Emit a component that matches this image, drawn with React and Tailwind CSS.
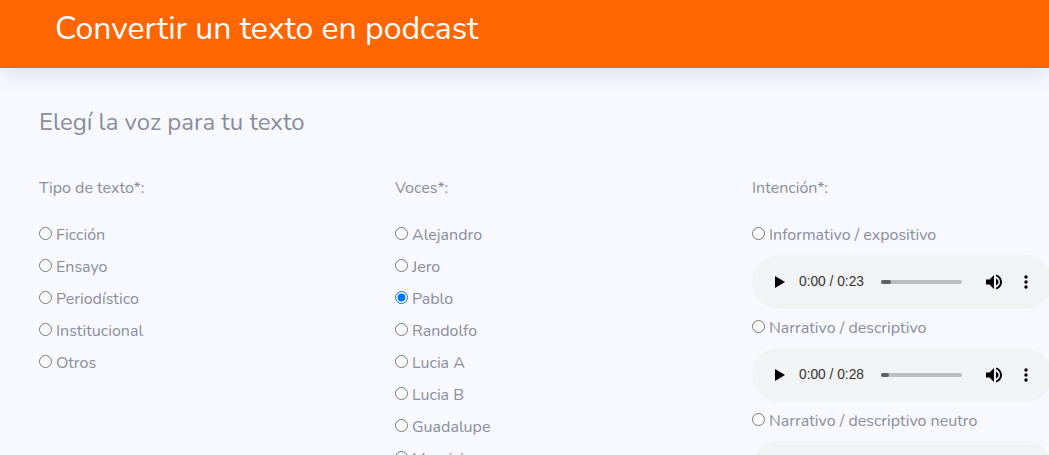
const tipos = ["Ficción", "Ensayo", "Periodístico", "Institucional", "Otros"];
const voces = ["Alejandro", "Jero", "Pablo", "Randolfo", "Lucia A", "Lucia B", "Guadalupe", "Mauricio"];
const intenciones = [
  { label: "Informativo / expositivo", time: "0:00 / 0:23", progress: 10 },
  { label: "Narrativo / descriptivo", time: "0:00 / 0:28", progress: 8 },
  { label: "Narrativo / descriptivo neutro", time: "0:00 / 0:31", progress: 8 },
];

function Radio({ label, name, checked }) {
  return (
    <label className="flex items-center h-6">
      <input
        type="radio"
        name={name}
        defaultChecked={checked}
        className="w-[13px] h-[13px] mr-[4px] mb-[3px] accent-[#0075ff] appearance-auto"
      />
      <span>{label}</span>
    </label>
  );
}

function Player({ time, progress }) {
  return (
    <div className="flex items-center w-[300px] h-[54px] shrink-0 rounded-[27px] bg-[#f1f3f4] mt-[8px] mb-[7px] text-black">
      <svg width="12" height="14" viewBox="0 0 12 14" className="ml-[22px]">
        <path d="M1 1v12l10-6z" fill="#000" />
      </svg>
      <span className="ml-[13px] text-[13.750px] leading-none font-['Liberation_Sans',sans-serif] text-[#333333] w-[82px] whitespace-nowrap">
        {time}
      </span>
      <div className="relative w-[81px] h-1 rounded-full bg-[#bdbdbd]">
        <div className="h-1 rounded-full bg-[#5f5f5f]" style={{ width: `${progress}px` }} />
      </div>
      <svg width="18" height="18" viewBox="0 0 18 18" className="ml-[23px]">
        <path d="M1 6.500v5h3.500L9 16V2L4.500 6.500z" fill="#000" />
        <path d="M11 5.500v7c1.500-.7 2.500-2 2.500-3.500S12.500 6.200 11 5.500z" fill="#000" />
        <path d="M11 1.500v1.800c2.400.8 4 3 4 5.700s-1.600 4.900-4 5.700v1.800c3.400-.9 6-3.900 6-7.500s-2.600-6.600-6-7.500z" fill="#000" />
      </svg>
      <svg width="4" height="16" viewBox="0 0 4 16" className="ml-[21px]">
        <circle cx="2" cy="3" r="1.700" fill="#000" />
        <circle cx="2" cy="8" r="1.700" fill="#000" />
        <circle cx="2" cy="13" r="1.700" fill="#000" />
      </svg>
    </div>
  );
}

export default function App() {
  return (
    <div className="h-[455px] w-full overflow-hidden bg-[#f8f9fe] font-['Nunito','Lato','Noto_Sans',sans-serif] text-[#8a8d9c]">
      <header className="h-[68px] bg-[#ff6600] pl-[55px] pt-[6px] shadow-[0_6px_24px_rgba(0,0,0,0.1)]">
        <h1 className="text-[32px] leading-[46px] text-white">Convertir un texto en podcast</h1>
      </header>

      <main className="pl-[39px] pt-[38px]">
        <h2 className="text-2xl leading-8">Elegí la voz para tu texto</h2>

        <div className="grid grid-cols-[356px_357px_1fr] mt-[38px] text-base">
          <div>
            <p className="h-6 leading-6 mb-[23px]">Tipo de texto*:</p>
            <div className="flex flex-col gap-2">
              {tipos.map((t) => (
                <Radio key={t} label={t} name="tipo" />
              ))}
            </div>
          </div>

          <div>
            <p className="h-6 leading-6 mb-[23px]">Voces*:</p>
            <div className="flex flex-col gap-2">
              {voces.map((v) => (
                <Radio key={v} label={v} name="voz" checked={v === "Pablo"} />
              ))}
            </div>
          </div>

          <div>
            <p className="h-6 leading-6 mb-[23px]">Intención*:</p>
            <div className="flex flex-col">
              {intenciones.map((i) => (
                <div key={i.label}>
                  <Radio label={i.label} name="intencion" />
                  <Player time={i.time} progress={i.progress} />
                </div>
              ))}
            </div>
          </div>
        </div>
      </main>
    </div>
  );
}
